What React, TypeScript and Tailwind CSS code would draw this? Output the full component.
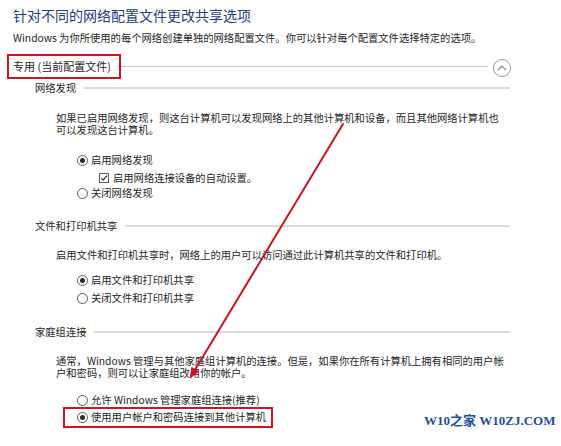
import React from "react";

const FONT = '"Noto Sans CJK SC", "Noto Sans", sans-serif';

function Radio({ checked, label, className = "" }: { checked?: boolean; label: string; className?: string }) {
  return (
    <div className={`flex items-center h-[14px] pl-[77px] gap-[3px] whitespace-nowrap ${className}`}>
      <span className="w-[11px] h-[11px] rounded-full border border-[#5a5a5a] bg-white flex items-center justify-center">
        {checked && <span className="w-[5px] h-[5px] rounded-full bg-[#2a2a2a]" />}
      </span>
      <span>{label}</span>
    </div>
  );
}

function SubHeader({ label, className = "" }: { label: string; className?: string }) {
  return (
    <div className={`flex items-center h-[14px] pl-[35px] pr-[51px] ${className}`}>
      <span className="whitespace-nowrap">{label}</span>
      <span className="flex-1 ml-[8px] h-[2px] bg-[#dcdcdc]" />
    </div>
  );
}

export default function App() {
  return (
    <div
      className="relative w-[561px] h-[446px] bg-white overflow-hidden text-[#262626] text-[10.3px] leading-[12px]"
      style={{ fontFamily: FONT }}
    >
      <div className="pt-[6px] pl-[13px] h-[24px]">
        <div className="text-[14px] leading-[18px] text-[#22407f] whitespace-nowrap">针对不同的网络配置文件更改共享选项</div>
      </div>
      <div className="mt-[8px] pl-[13px] h-[12px] whitespace-nowrap">
        Windows 为你所使用的每个网络创建单独的网络配置文件。你可以针对每个配置文件选择特定的选项。
      </div>

      <div className="mt-[10px] h-[24px] flex items-center pl-[13px] pr-[50px]">
        <span className="whitespace-nowrap text-[11px]">专用 (当前配置文件)</span>
        <span className="flex-1 ml-[6px] h-px bg-[#c4c4c4]" />
        <span className="ml-[5px] w-[18px] h-[18px] rounded-full border border-[#9a9a9a] flex items-center justify-center mt-[3px]">
          <svg width="10" height="6" viewBox="0 0 10 6">
            <path d="M1 5 L5 1 L9 5" fill="none" stroke="#8a8a8a" strokeWidth="1.2" />
          </svg>
        </span>
      </div>

      <SubHeader label="网络发现" className="mt-[3px]" />
      <div className="mt-[17px] pl-[56px] whitespace-nowrap">
        如果已启用网络发现，则这台计算机可以发现网络上的其他计算机和设备，而且其他网络计算机也
        <br />
        可以发现这台计算机。
      </div>
      <Radio checked label="启用网络发现" className="mt-[17px]" />
      <div className="mt-[4px] flex items-center h-[14px] pl-[99px] gap-[4px] whitespace-nowrap">
        <span className="w-[10px] h-[10px] border border-[#5a5a5a] bg-white flex items-center justify-center">
          <svg width="8" height="8" viewBox="0 0 8 8">
            <path d="M1.2 4.2 L3.2 6.2 L6.9 1.6" fill="none" stroke="#2a2a2a" strokeWidth="1.1" />
          </svg>
        </span>
        <span>启用网络连接设备的自动设置。</span>
      </div>
      <Radio label="关闭网络发现" className="mt-[1px]" />

      <SubHeader label="文件和打印机共享" className="mt-[19px]" />
      <div className="mt-[16px] pl-[56px] whitespace-nowrap">
        启用文件和打印机共享时，网络上的用户可以访问通过此计算机共享的文件和打印机。
      </div>
      <Radio checked label="启用文件和打印机共享" className="mt-[12px]" />
      <Radio label="关闭文件和打印机共享" className="mt-[4px]" />

      <SubHeader label="家庭组连接" className="mt-[20px]" />
      <div className="mt-[16px] pl-[56px] whitespace-nowrap">
        通常，Windows 管理与其他家庭组计算机的连接。但是，如果你在所有计算机上拥有相同的用户帐
        <br />
        户和密码，则可以让家庭组改用你的帐户。
      </div>
      <Radio label="允许 Windows 管理家庭组连接(推荐)" className="mt-[14px]" />
      <div className="h-[20px] flex items-center">
        <Radio checked label="使用用户帐户和密码连接到其他计算机" />
      </div>

      {/* annotations */}
      <div className="absolute left-[7px] top-[54px] w-[114px] h-[25px] border-[2.5px] border-[#d2141e]" />
      <div className="absolute left-[63px] top-[407px] w-[210px] h-[21px] border-[2.5px] border-[#d2141e]" />
      <svg className="absolute left-0 top-0 pointer-events-none" width="561" height="446" viewBox="0 0 561 446">
        <line x1="343" y1="124" x2="195.5" y2="369" stroke="#cc1422" strokeWidth="2" strokeLinecap="round" />
        <polygon points="189.5,379 199,371.5 191.5,366.8" fill="#cc1422" />
      </svg>
      <div
        className="absolute left-[424px] top-[413px] text-[13px] leading-[16px] font-bold text-[#1d4f9f] whitespace-nowrap"
        style={{ fontFamily: '"Liberation Serif", "Noto Sans CJK SC", serif' }}
      >
        W10之家 W10ZJ.COM
      </div>
    </div>
  );
}
